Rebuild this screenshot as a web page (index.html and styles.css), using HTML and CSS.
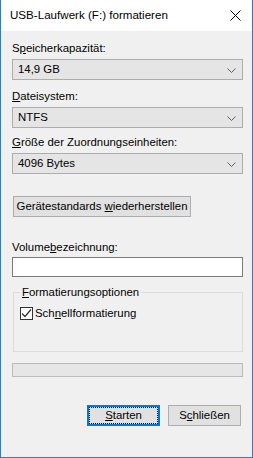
FILE: index.html
```html
<!DOCTYPE html>
<html lang="de">
<head>
    <meta charset="UTF-8">
    <title>USB-Laufwerk (F:) formatieren</title>
    <link rel="stylesheet" href="styles.css">
</head>
<body>
    <div class="window">
        <div class="titlebar">
            <span class="title">USB-Laufwerk (F:) formatieren</span>
            <span class="close">
                <svg width="11" height="11" viewBox="0 0 11 11"><path d="M0.5 0.5 L10.5 10.5 M10.5 0.5 L0.5 10.5" stroke="#000" stroke-width="1" fill="none"/></svg>
            </span>
        </div>
        <div class="content">
            <div class="label first">S<u>p</u>eicherkapazität:</div>
            <div class="combo">
                <span>14,9 GB</span>
                <svg class="chev" width="9" height="5" viewBox="0 0 9 5"><path d="M0.5 0.5 L4.5 4.5 L8.5 0.5" stroke="#606060" fill="none"/></svg>
            </div>

            <div class="label second"><u>D</u>ateisystem:</div>
            <div class="combo">
                <span>NTFS</span>
                <svg class="chev" width="9" height="5" viewBox="0 0 9 5"><path d="M0.5 0.5 L4.5 4.5 L8.5 0.5" stroke="#606060" fill="none"/></svg>
            </div>

            <div class="label third"><u>G</u>röße der Zuordnungseinheiten:</div>
            <div class="combo">
                <span>4096 Bytes</span>
                <svg class="chev" width="9" height="5" viewBox="0 0 9 5"><path d="M0.5 0.5 L4.5 4.5 L8.5 0.5" stroke="#606060" fill="none"/></svg>
            </div>

            <div class="btn restore"><span>Gerätestandards <u>w</u>iederherstellen</span></div>

            <div class="label volume">Volume<u>b</u>ezeichnung:</div>
            <div class="textbox"></div>

            <fieldset class="options">
                <legend><u>F</u>ormatierungsoptionen</legend>
                <div class="check-row">
                    <span class="checkbox">
                        <svg width="11" height="11" viewBox="0 0 11 11"><path d="M1 5.5 L4 8.5 L10 1.5" stroke="#333" stroke-width="1.2" fill="none"/></svg>
                    </span>
                    <span>Sch<u>n</u>ellformatierung</span>
                </div>
            </fieldset>

            <div class="progress"></div>

            <div class="actions">
                <div class="btn default"><span class="focus"><span><u>S</u>tarten</span></span></div>
                <div class="btn"><span>S<u>c</u>hließen</span></div>
            </div>
        </div>
    </div>
</body>
</html>
```

FILE: styles.css
```css
body {
    margin: 0;
    font-family: "Segoe UI", "Liberation Sans", Arial, sans-serif;
    font-size: 11.4px;
    color: #000;
}
u {
    text-decoration: underline;
    text-underline-offset: 1px;
}
.window {
    width: 253px;
    height: 458px;
    box-sizing: border-box;
    border: 1px solid #1883d7;
    border-top: none;
    background: #f0f0f0;
    display: flex;
    flex-direction: column;
}
.titlebar {
    height: 31px;
    background: #fff;
    display: flex;
    align-items: center;
    justify-content: space-between;
    padding: 0 10px 0 9px;
}
.title {
    font-size: 11.6px;
    line-height: 16px;
    margin-top: -1px;
}
.close {
    display: flex;
    margin-right: 1px;
}
.content {
    padding: 10px 9px 0 11px;
    display: flex;
    flex-direction: column;
}
.label {
    line-height: 15px;
    margin-bottom: 3px;
}
.label.second {
    margin-top: 9px;
}
.label.third {
    margin-top: 7px;
}
.combo {
    height: 21px;
    box-sizing: border-box;
    border: 1px solid #adadad;
    background: #e5e5e5;
    display: flex;
    align-items: center;
    justify-content: space-between;
    padding: 0 6px 0 5px;
    line-height: 15px;
}
.chev {
    margin-top: 1px;
}
.btn {
    height: 21px;
    box-sizing: border-box;
    border: 1px solid #adadad;
    background: #e1e1e1;
    display: flex;
    align-items: center;
    justify-content: center;
    line-height: 15px;
    white-space: nowrap;
}
.restore {
    width: 178px;
    margin: 22px 0 0 1px;
}
.label.volume {
    margin-top: 23px;
    margin-bottom: 2px;
}
.textbox {
    height: 20px;
    box-sizing: border-box;
    border: 1px solid #7a7a7a;
    background: #fff;
}
.options {
    margin: 8px 0 0 1px;
    padding: 6px 6px 0 6px;
    height: 59px;
    border: 1px solid #dcdcdc;
    min-width: 0;
}
.options legend {
    padding: 0 2px;
    margin-left: 0;
    line-height: 15px;
}
.check-row {
    display: flex;
    align-items: center;
    gap: 2px;
    line-height: 15px;
}
.checkbox {
    width: 13px;
    height: 13px;
    box-sizing: border-box;
    border: 1px solid #333;
    background: #fff;
    display: flex;
    align-items: center;
    justify-content: center;
}
.progress {
    margin-top: 11px;
    height: 14px;
    box-sizing: border-box;
    border: 1px solid #bcbcbc;
    background: #e6e6e6;
}
.actions {
    display: flex;
    justify-content: flex-end;
    gap: 8px;
    margin-top: 28px;
    padding-right: 2px;
}
.actions .btn {
    width: 73px;
}
.btn.default {
    border: 2px solid #0078d7;
    padding: 1px;
}
.focus {
    flex: 1;
    align-self: stretch;
    display: flex;
    align-items: center;
    justify-content: center;
    outline: 1px dotted #000;
}
```
